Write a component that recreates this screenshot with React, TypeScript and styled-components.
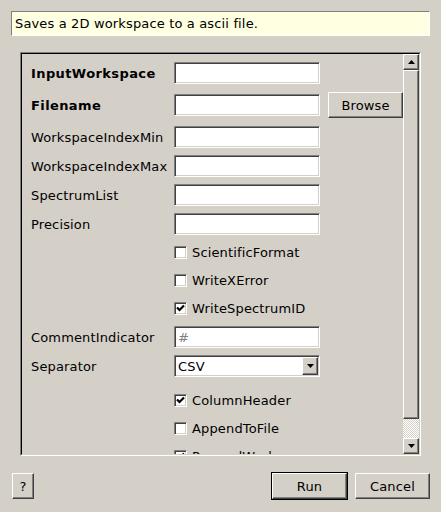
import React from 'react';
import styled, { createGlobalStyle, css } from 'styled-components';

const GlobalStyle = createGlobalStyle`
  html, body {
    margin: 0;
    padding: 0;
    background: #d4d0c8;
  }
  body {
    font-family: 'DejaVu Sans', 'Liberation Sans', sans-serif;
    font-size: 13px;
    letter-spacing: 0.15px;
    color: #000;
  }
`;

// shared bevels, classic look
const raised = css`
  border: 1px solid;
  border-color: #fff #404040 #404040 #fff;
  box-shadow: inset -1px -1px 0 #808080, inset 1px 1px 0 #d4d0c8;
  background: #d4d0c8;
`;

const sunken = css`
  border: 1px solid;
  border-color: #808080 #fff #fff #808080;
  box-shadow: inset 1px 1px 0 #404040, inset -1px -1px 0 #d4d0c8;
  background: #fff;
`;

const Dialog = styled.div`
  width: 441px;
  height: 512px;
  box-sizing: border-box;
  padding-top: 11px;
  display: flex;
  flex-direction: column;
  background: #d4d0c8;
`;

const Description = styled.div`
  height: 25px;
  margin: 0 11px;
  box-sizing: border-box;
  padding-left: 3px;
  display: flex;
  align-items: center;
  background: #ffffe1;
  border: 1px solid;
  border-color: #808080 #fff #fff #808080;
  line-height: 15px;
`;

const Frame = styled.div`
  width: 401px;
  height: 404px;
  margin: 16px 0 0 20px;
  box-sizing: border-box;
  border: 1px solid;
  border-color: #808080 #fff #fff #808080;
`;

const FrameInner = styled.div`
  height: 100%;
  box-sizing: border-box;
  border: 1px solid;
  border-color: #000 #d4d0c8 #d4d0c8 #000;
  display: flex;
`;

const Content = styled.div`
  flex: 1;
  overflow: hidden;
  display: flex;
  flex-direction: column;
  gap: 7px;
  padding: 8px 0 0 9px;
`;

const Row = styled.div<{ $h?: number; $extra?: number }>`
  flex: none;
  display: flex;
  align-items: center;
  height: ${(p) => p.$h ?? 22}px;
  margin-top: ${(p) => p.$extra ?? 0}px;
`;

const Label = styled.div<{ $bold?: boolean }>`
  width: 143px;
  flex: none;
  white-space: nowrap;
  font-weight: ${(p) => (p.$bold ? 'bold' : 'normal')};
  letter-spacing: ${(p) => (p.$bold ? '0.4px' : '0.15px')};
  line-height: 15px;
`;

const TextBox = styled.input`
  ${sunken};
  width: 146px;
  height: 22px;
  box-sizing: border-box;
  padding: 0 0 0 3px;
  margin: 0;
  font: inherit;
  outline: none;
  &::placeholder {
    color: #808080;
  }
`;

const PushButton = styled.button<{ $w: number }>`
  ${raised};
  width: ${(p) => p.$w}px;
  height: 26px;
  box-sizing: border-box;
  padding: 0;
  margin: 0;
  font: inherit;
  letter-spacing: inherit;
  color: #000;
  line-height: 15px;
`;

const BrowseButton = styled(PushButton)`
  margin-left: 8px;
`;

const CheckBox = styled.span`
  ${sunken};
  width: 13px;
  height: 13px;
  box-sizing: border-box;
  flex: none;
  display: flex;
  align-items: center;
  justify-content: center;
`;

const CheckText = styled.span`
  margin-left: 5px;
  white-space: nowrap;
  line-height: 15px;
`;

const Combo = styled.div`
  ${sunken};
  width: 146px;
  height: 22px;
  box-sizing: border-box;
  padding: 1px;
  display: flex;
  align-items: stretch;
`;

const ComboText = styled.span`
  flex: 1;
  padding-left: 2px;
  display: flex;
  align-items: center;
`;

const ArrowButton = styled.div<{ $h?: number }>`
  ${raised};
  width: 16px;
  height: ${(p) => (p.$h ? `${p.$h}px` : 'auto')};
  box-sizing: border-box;
  flex: none;
  display: flex;
  align-items: center;
  justify-content: center;
`;

const ScrollBar = styled.div`
  width: 16px;
  flex: none;
  display: flex;
  flex-direction: column;
`;

const Thumb = styled.div`
  ${raised};
  height: 349px;
  box-sizing: border-box;
`;

const Trough = styled.div`
  height: 19px;
  background: repeating-conic-gradient(#fff 0 25%, #d4d0c8 0 50%) 0 0 / 2px 2px;
`;

const ButtonBar = styled.div`
  margin-top: 16px;
  padding: 0 11px 0 12px;
  height: 28px;
  display: flex;
  align-items: center;
`;

const Grow = styled.div`
  flex: 1;
`;

const DefaultRing = styled.div`
  border: 1px solid #000;
  display: flex;
`;

const CancelButton = styled(PushButton)`
  margin-left: 7px;
`;

const Tick = () => (
  <svg width="9" height="9" viewBox="0 0 9 9">
    <path d="M1 3.5 L3.5 6 L8 1.5" fill="none" stroke="#000" strokeWidth="2.2" />
  </svg>
);

const Triangle = ({ up }: { up?: boolean }) => (
  <svg width="7" height="4" viewBox="0 0 7 4">
    <polygon points={up ? '3.5,0 7,4 0,4' : '0,0 7,0 3.5,4'} fill="#000" />
  </svg>
);

const CheckRow = ({ label, checked, extra }: { label: string; checked?: boolean; extra?: number }) => (
  <Row $h={21} $extra={extra}>
    <Label />
    <CheckBox>{checked && <Tick />}</CheckBox>
    <CheckText>{label}</CheckText>
  </Row>
);

const FieldRow = ({ label, bold, placeholder, extra }: { label: string; bold?: boolean; placeholder?: string; extra?: number }) => (
  <Row $extra={extra}>
    <Label $bold={bold}>{label}</Label>
    <TextBox placeholder={placeholder} />
  </Row>
);

export default function App() {
  return (
    <>
      <GlobalStyle />
      <Dialog>
        <Description>Saves a 2D workspace to a ascii file.</Description>
        <Frame>
          <FrameInner>
            <Content>
              <FieldRow label="InputWorkspace" bold />
              <Row $h={26} $extra={1}>
                <Label $bold>Filename</Label>
                <TextBox />
                <BrowseButton $w={75}>Browse</BrowseButton>
              </Row>
              <FieldRow label="WorkspaceIndexMin" extra={1} />
              <FieldRow label="WorkspaceIndexMax" />
              <FieldRow label="SpectrumList" />
              <FieldRow label="Precision" />
              <CheckRow label="ScientificFormat" />
              <CheckRow label="WriteXError" />
              <CheckRow label="WriteSpectrumID" checked />
              <FieldRow label="CommentIndicator" placeholder="#" />
              <Row>
                <Label>Separator</Label>
                <Combo>
                  <ComboText>CSV</ComboText>
                  <ArrowButton>
                    <Triangle />
                  </ArrowButton>
                </Combo>
              </Row>
              <CheckRow label="ColumnHeader" checked extra={6} />
              <CheckRow label="AppendToFile" />
              <CheckRow label="RaggedWorkspace" checked />
            </Content>
            <ScrollBar>
              <ArrowButton $h={16}>
                <Triangle up />
              </ArrowButton>
              <Thumb />
              <Trough />
              <ArrowButton $h={16}>
                <Triangle />
              </ArrowButton>
            </ScrollBar>
          </FrameInner>
        </Frame>
        <ButtonBar>
          <PushButton $w={22}>?</PushButton>
          <Grow />
          <DefaultRing>
            <PushButton $w={75}>Run</PushButton>
          </DefaultRing>
          <CancelButton $w={75}>Cancel</CancelButton>
        </ButtonBar>
      </Dialog>
    </>
  );
}
